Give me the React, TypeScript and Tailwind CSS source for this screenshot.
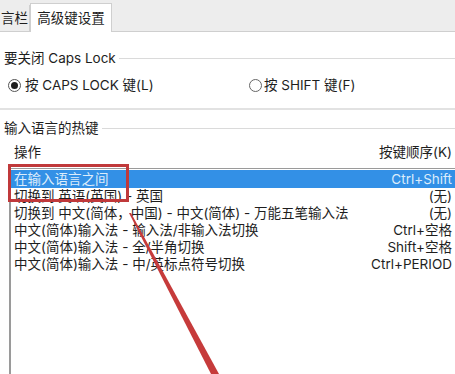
export default function App() {
  const rows = [
    { name: "在输入语言之间", keys: "Ctrl+Shift", selected: true },
    { name: "切换到 英语(英国) - 英国", keys: "(无)" },
    { name: "切换到 中文(简体，中国) - 中文(简体) - 万能五笔输入法", keys: "(无)" },
    { name: "中文(简体)输入法 - 输入法/非输入法切换", keys: "Ctrl+空格" },
    { name: "中文(简体)输入法 - 全/半角切换", keys: "Shift+空格" },
    { name: "中文(简体)输入法 - 中/英标点符号切换", keys: "Ctrl+PERIOD" },
  ];

  return (
    <div
      className="relative w-[455px] h-[374px] overflow-hidden bg-white text-[13.5px] text-[#1e1e1e]"
      style={{ fontFamily: 'Inter, "Noto Sans CJK SC", sans-serif' }}
    >
      {/* Tabs */}
      <div className="flex h-[32px] items-end border-b border-[#cfcfcf] bg-[#ededed]">
        <div className="flex h-[26px] w-[30px] items-center justify-end overflow-hidden border-r border-[#cfcfcf] pr-[1px]">
          <span className="whitespace-nowrap leading-[18px]">言栏</span>
        </div>
        <div className="-mb-px flex h-[29px] w-[82px] items-center justify-center border border-b-0 border-[#cfcfcf] bg-white">
          <span className="leading-[18px]">高级键设置</span>
        </div>
      </div>

      {/* Caps Lock group */}
      <div className="mt-[17px] flex h-[18px] items-center pl-[4px]">
        <span className="leading-[18px]">要关闭 Caps Lock</span>
        <div className="ml-[3px] h-px flex-1 bg-[#dadada]" />
      </div>
      <div className="mt-[9px] flex h-[18px] items-center">
        <div className="flex w-[247px] items-center pl-[8px]">
          <span className="flex h-[13px] w-[13px] items-center justify-center rounded-full border border-[#555]">
            <span className="h-[7px] w-[7px] rounded-full bg-[#1e1e1e]" />
          </span>
          <span className="ml-[4px] leading-[18px]">按 CAPS LOCK 键(L)</span>
        </div>
        <div className="flex items-center pl-[2px]">
          <span className="h-[13px] w-[13px] rounded-full border border-[#666]" />
          <span className="ml-[2px] leading-[18px]">按 SHIFT 键(F)</span>
        </div>
      </div>
      <div className="mt-[14px] h-[2px] bg-[#e2e2e2]" />

      {/* Hotkeys group */}
      <div className="mt-[9px] flex h-[18px] items-center pl-[4px]">
        <span className="leading-[18px]">输入语言的热键</span>
        <div className="ml-[3px] h-px flex-1 bg-[#dadada]" />
      </div>
      <div className="mt-[6px] flex h-[18px] items-center justify-between pl-[14px] pr-[3px]">
        <span className="leading-[18px]">操作</span>
        <span className="leading-[18px]">按键顺序(K)</span>
      </div>
      <div className="ml-[9px] mt-[7px] h-[220px] border-l-2 border-t border-[#9a9a9a] pt-[1px]">
        {rows.map((r) => (
          <div
            key={r.name}
            className={
              r.selected
                ? "flex h-[18px] items-center justify-between bg-[#3390e6] pl-[3px] pr-[3px] text-[#dcecfb]"
                : "flex h-[17px] items-center justify-between pl-[3px] pr-[3px]"
            }
          >
            <span className={r.selected ? "whitespace-nowrap leading-[18px]" : "whitespace-nowrap leading-[17px]"}>
              {r.name}
            </span>
            <span className={r.selected ? "whitespace-nowrap leading-[18px]" : "whitespace-nowrap leading-[17px]"}>
              {r.keys}
            </span>
          </div>
        ))}
      </div>

      {/* Annotation */}
      <div className="absolute left-[8px] top-[164px] h-[38px] w-[121px] border-[3px] border-[#c0393b]" />
      <svg className="absolute left-0 top-0" width="455" height="374" viewBox="0 0 455 374">
        <polygon points="129,213 131,213 219,374 211,374" fill="#c63b3b" />
      </svg>
    </div>
  );
}
